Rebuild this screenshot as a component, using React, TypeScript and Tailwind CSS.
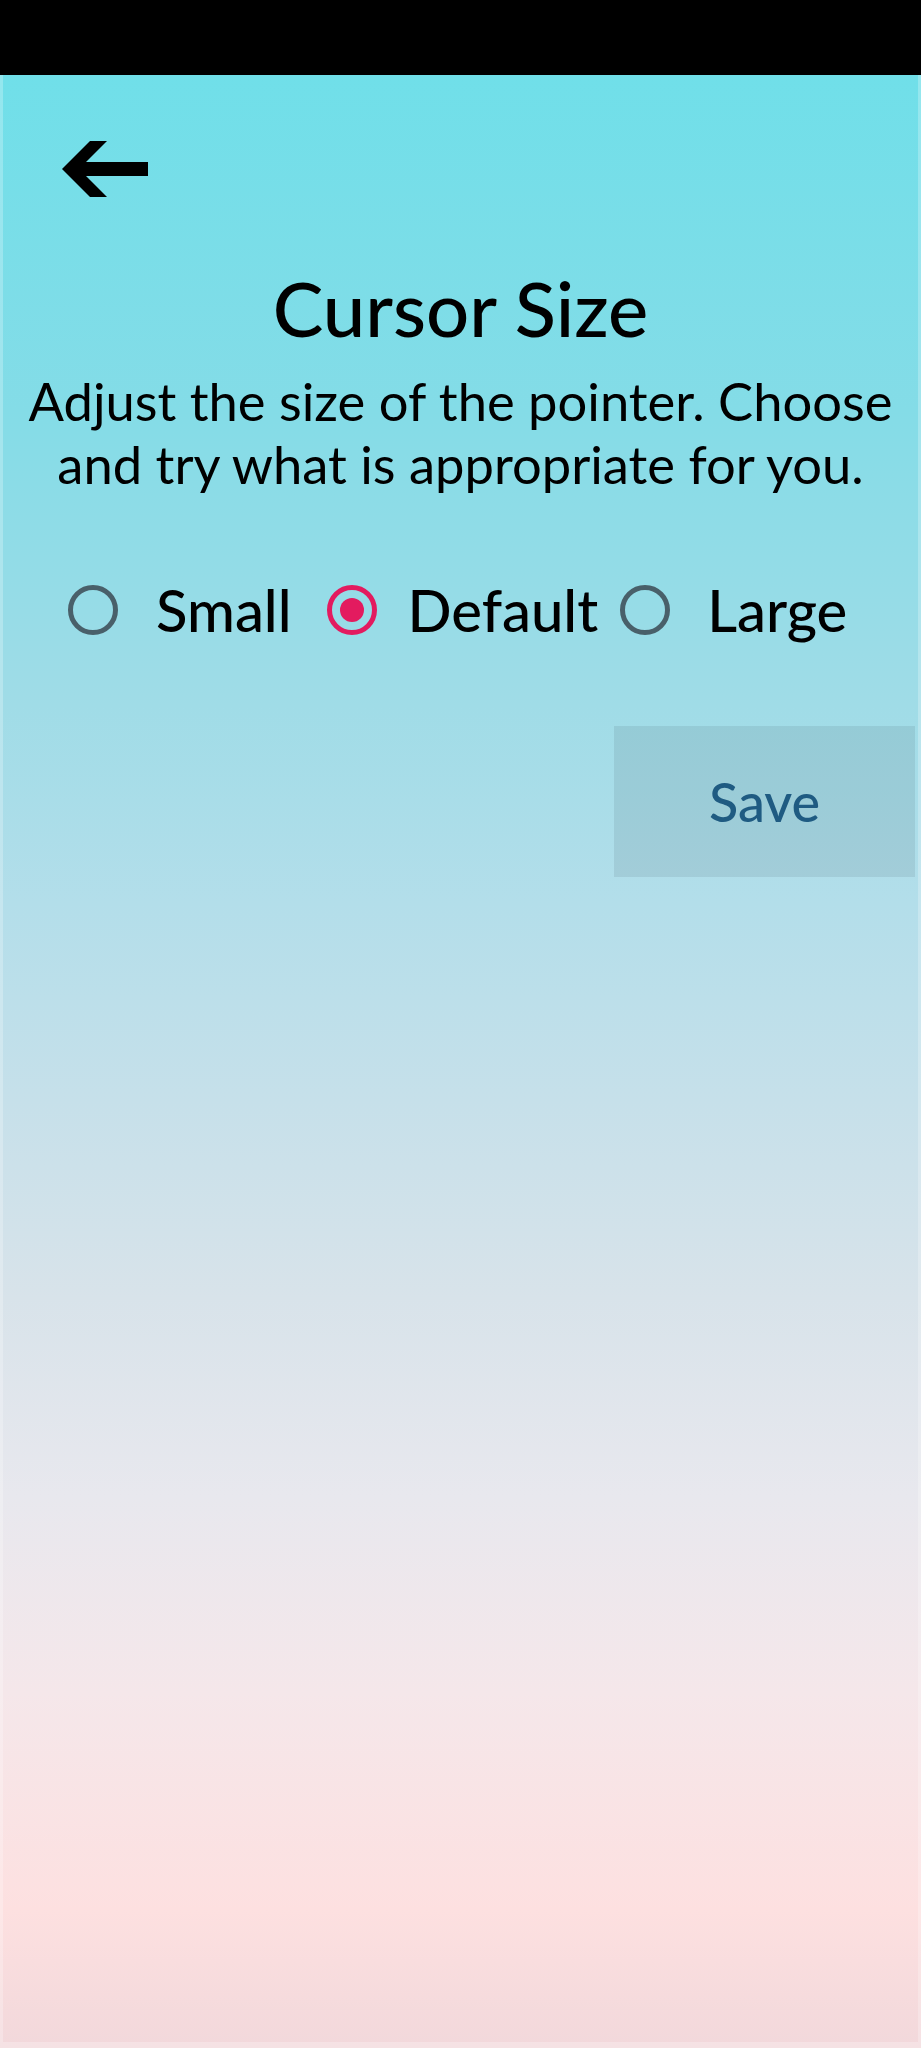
import { useState } from 'react'

const sizes = [
  { name: 'Small', gap: 'ml-[38px]', after: 'mr-[35px]' },
  { name: 'Default', gap: 'ml-[31px]', after: 'mr-[22px]' },
  { name: 'Large', gap: 'ml-[37px]', after: '' },
]

function Radio({ checked }: { checked: boolean }) {
  return (
    <span
      className={`flex h-[50px] w-[50px] shrink-0 items-center justify-center rounded-full border-[5px] ${
        checked ? 'border-[#e31b5f]' : 'border-[#49606a]'
      }`}
    >
      {checked && <span className="h-[24px] w-[24px] rounded-full bg-[#e31b5f]" />}
    </span>
  )
}

function BackArrow() {
  return (
    <svg width="90" height="60" viewBox="60 140 90 60" className="block">
      <polygon
        points="62,170 90,142 107,142 86,163 148,163 148,177 86,177 107,198 90,198"
        fill="#000"
      />
    </svg>
  )
}

export default function App() {
  const [selected, setSelected] = useState('Default')

  return (
    <div className="flex min-h-screen flex-col bg-black font-['Lato','Noto_Sans',sans-serif] text-black">
      {/* status bar */}
      <div className="h-[75px] shrink-0 bg-black" />

      <div className="flex flex-1 flex-col border-x-[3px] border-b-[6px] border-white/25 bg-origin-border bg-[linear-gradient(180deg,#70dfe9_0%,#84dce7_17%,#a0dce7_32%,#b3deea_42%,#c6e0ea_52%,#d8e3ea_62%,#e8e8ee_72%,#f5e7ea_82%,#fde0e0_93%,#f2d8db_100%)]">
        <div className="pl-[57px] pt-[64px]">
          <button className="block">
            <BackArrow />
          </button>
        </div>

        <h1 className="mt-[71px] text-center text-[76px] leading-[76px] font-medium">Cursor Size</h1>

        <p className="mt-[23px] text-center text-[52.5px] leading-[63px] font-normal">
          Adjust the size of the pointer. Choose
          <br />
          and try what is appropriate for you.
        </p>

        <div className="mt-[86px] flex items-center pl-[65px]">
          {sizes.map((s) => (
            <label
              key={s.name}
              onClick={() => setSelected(s.name)}
              className={`flex cursor-pointer items-center ${s.after}`}
            >
              <Radio checked={selected === s.name} />
              <span className={`text-[58px] leading-[58px] font-medium ${s.gap}`}>{s.name}</span>
            </label>
          ))}
        </div>

        <div className="mt-[87px] flex justify-end pr-[3px]">
          <button className="flex h-[151px] w-[301px] items-center justify-center bg-[#2a3a48]/[0.1] text-[54px] font-medium text-[#1f5b82]">
            Save
          </button>
        </div>
      </div>
    </div>
  )
}
